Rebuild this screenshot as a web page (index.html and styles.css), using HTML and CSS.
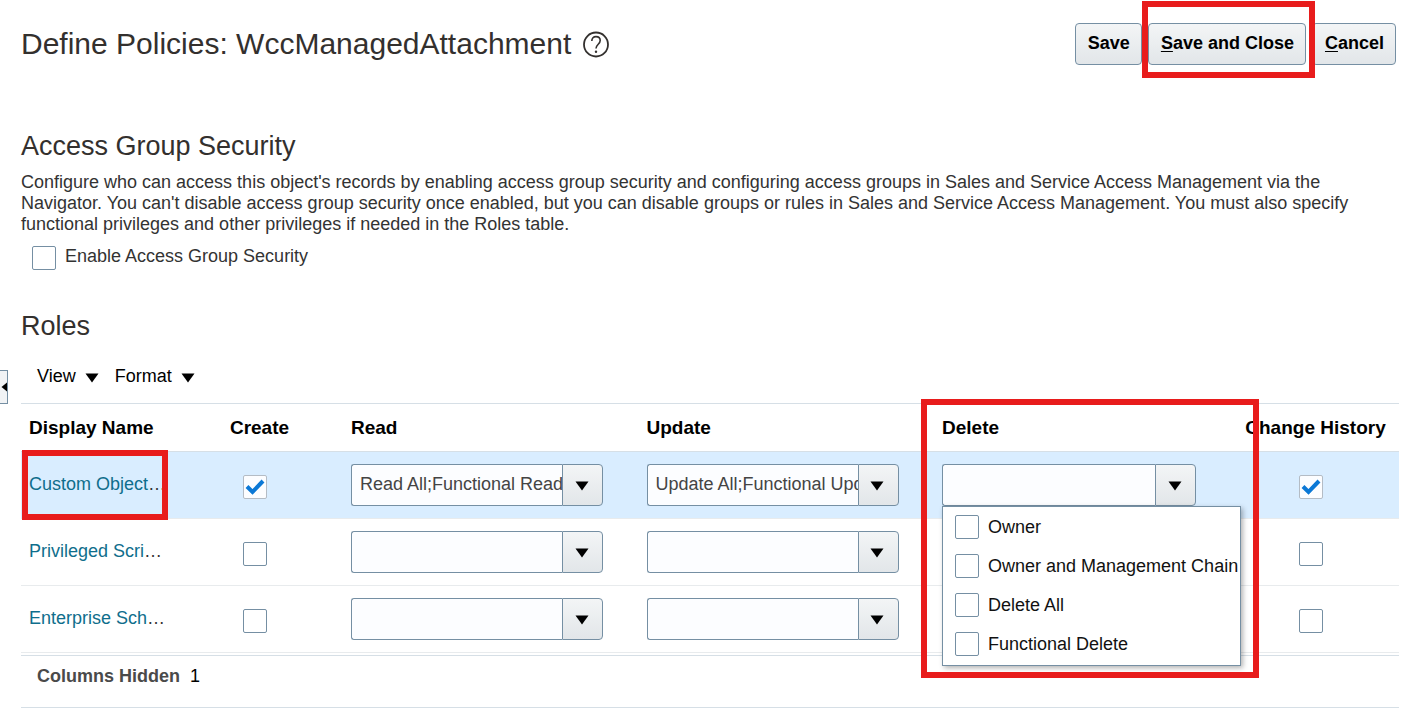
FILE: index.html
```html
<!DOCTYPE html>
<html lang="en">
<head>
<meta charset="utf-8">
<title>Define Policies: WccManagedAttachment</title>
<link rel="stylesheet" href="styles.css">
</head>
<body>
<div class="shell">
  <aside class="rail">
    <button class="rail-toggle" type="button" aria-label="Expand panel">
      <svg width="6" height="10" viewBox="0 0 6 10" aria-hidden="true"><path d="M6 .5v9L.5 5z"/></svg>
    </button>
  </aside>
  <main class="page">
    <header class="page-header">
      <h1 class="page-title">Define Policies: WccManagedAttachment</h1>
      <button class="help" type="button" aria-label="Help">
        <svg width="28" height="28" viewBox="0 0 28 28" fill="none" stroke="#33302e" aria-hidden="true">
          <circle cx="14" cy="14.500" r="12" stroke-width="1.8"/>
          <path d="M9.800 11c0-2.800 1.700-4.400 4.200-4.400s4.200 1.600 4.200 4c0 3.600-4.200 3.800-4.200 8" stroke-width="1.600"/>
          <circle cx="14" cy="21.800" r="1.200" fill="#33302e" stroke="none"/>
        </svg>
      </button>
      <div class="actions">
        <button class="btn" type="button">Save</button>
        <div class="marked marked-save"><button class="btn" type="button"><u>S</u>ave and Close</button></div>
        <button class="btn" type="button"><u>C</u>ancel</button>
      </div>
    </header>

    <section class="access">
      <h2 class="section-title">Access Group Security</h2>
      <p class="intro">Configure who can access this object's records by enabling access group security and configuring access groups in Sales and Service Access Management via the Navigator. You can't disable access group security once enabled, but you can disable groups or rules in Sales and Service Access Management. You must also specify functional privileges and other privileges if needed in the Roles table.</p>
      <div class="enable">
        <input class="check" type="checkbox" id="enable">
        <label for="enable">Enable Access Group Security</label>
      </div>
    </section>

    <section class="roles">
      <h2 class="section-title">Roles</h2>
      <div class="toolbar">
        <button class="menu-btn" type="button">View <svg class="tri" viewBox="0 0 14 10" aria-hidden="true"><path d="M.5.5h13L7 9.500z"/></svg></button>
        <button class="menu-btn" type="button">Format <svg class="tri" viewBox="0 0 14 10" aria-hidden="true"><path d="M.5.5h13L7 9.500z"/></svg></button>
      </div>
      <table class="grid">
        <colgroup><col class="col-name"><col class="col-flag"><col><col><col class="col-delete"><col class="col-flag"></colgroup>
        <thead>
          <tr><th>Display Name</th><th class="flag">Create</th><th>Read</th><th>Update</th><th>Delete</th><th class="flag">Change History</th></tr>
        </thead>
        <tbody>
          <tr class="selected">
            <td class="name marked marked-name"><a href="#">Custom Object</a>…</td>
            <td class="tick"><input class="check" type="checkbox" checked aria-label="Create, Custom Object"></td>
            <td><div class="combo"><input type="text" value="Read All;Functional Read" aria-label="Read, Custom Object"><button type="button" aria-label="Open Read list"><svg class="tri" viewBox="0 0 14 10"><path d="M.5.5h13L7 9.500z"/></svg></button></div></td>
            <td><div class="combo"><input type="text" value="Update All;Functional Update" aria-label="Update, Custom Object"><button type="button" aria-label="Open Update list"><svg class="tri" viewBox="0 0 14 10"><path d="M.5.5h13L7 9.500z"/></svg></button></div></td>
            <td class="marked marked-delete">
              <div class="combo combo-open"><input type="text" aria-label="Delete, Custom Object"><button type="button" aria-label="Close Delete list"><svg class="tri" viewBox="0 0 14 10"><path d="M.5.5h13L7 9.500z"/></svg></button>
                <div class="options">
                  <label class="option"><input class="check" type="checkbox"><span>Owner</span></label>
                  <label class="option"><input class="check" type="checkbox"><span>Owner and Management Chain</span></label>
                  <label class="option"><input class="check" type="checkbox"><span>Delete All</span></label>
                  <label class="option"><input class="check" type="checkbox"><span>Functional Delete</span></label>
                </div>
              </div>
            </td>
            <td class="tick"><input class="check" type="checkbox" checked aria-label="Change History, Custom Object"></td>
          </tr>
          <tr>
            <td class="name"><a href="#">Privileged Scri</a>…</td>
            <td class="tick"><input class="check" type="checkbox" aria-label="Create, Privileged"></td>
            <td><div class="combo"><input type="text" aria-label="Read, Privileged"><button type="button" aria-label="Open Read list"><svg class="tri" viewBox="0 0 14 10"><path d="M.5.5h13L7 9.500z"/></svg></button></div></td>
            <td><div class="combo"><input type="text" aria-label="Update, Privileged"><button type="button" aria-label="Open Update list"><svg class="tri" viewBox="0 0 14 10"><path d="M.5.5h13L7 9.500z"/></svg></button></div></td>
            <td></td>
            <td class="tick"><input class="check" type="checkbox" aria-label="Change History, Privileged"></td>
          </tr>
          <tr>
            <td class="name"><a href="#">Enterprise Sch</a>…</td>
            <td class="tick"><input class="check" type="checkbox" aria-label="Create, Enterprise"></td>
            <td><div class="combo"><input type="text" aria-label="Read, Enterprise"><button type="button" aria-label="Open Read list"><svg class="tri" viewBox="0 0 14 10"><path d="M.5.5h13L7 9.500z"/></svg></button></div></td>
            <td><div class="combo"><input type="text" aria-label="Update, Enterprise"><button type="button" aria-label="Open Update list"><svg class="tri" viewBox="0 0 14 10"><path d="M.5.5h13L7 9.500z"/></svg></button></div></td>
            <td></td>
            <td class="tick"><input class="check" type="checkbox" aria-label="Change History, Enterprise"></td>
          </tr>
        </tbody>
      </table>
      <footer class="status"><strong>Columns Hidden</strong><span>1</span></footer>
    </section>
  </main>
</div>
</body>
</html>
```

FILE: styles.css
```css
* { box-sizing: border-box; }

body {
  margin: 0;
  background: #fff;
  color: #333;
  font: 18px/21px "Liberation Sans", Arial, sans-serif;
}

button, input { font: inherit; }

.shell { display: flex; }

/* left edge splitter */
.rail { flex: none; width: 8px; padding-top: 370px; }
.rail-toggle {
  display: flex;
  align-items: center;
  justify-content: flex-end;
  width: 8px;
  height: 34px;
  padding: 0;
  border: 1px solid #758fa3;
  border-left: 0;
  background: #f1f3f5;
}

.page { flex: 1; min-width: 0; padding: 23px 21px 0 13px; }

.page-header { display: flex; align-items: center; padding-right: 3px; }
.page-title { margin: 0; font-size: 30px; line-height: 42px; font-weight: 400; color: #33302e; }
.help { display: flex; margin-left: 11px; padding: 0; border: 0; background: none; }

.actions { display: flex; gap: 6px; margin-left: auto; }
.btn {
  height: 42px;
  padding: 0 11px 2px 12px;
  border: 1px solid #758fa3;
  border-radius: 4px;
  background: linear-gradient(#f3f5f6, #e2e6e9);
  color: #000;
  font-weight: 700;
}
.btn u { text-underline-offset: 2px; }

/* red callout frames */
.marked { position: relative; }
.marked::after {
  content: "";
  position: absolute;
  z-index: 3;
  border: 6px solid #e81c1c;
  pointer-events: none;
}
.marked-save::after { inset: -22px -9px -13px -6px; }
.marked-name::after { inset: -2px 8px -2px 1px; }
.marked-delete::after { inset: -53px -27px -160px -13px; }

.section-title { margin: 0; font-size: 27px; line-height: 32px; font-weight: 400; color: #33302e; }
.access { padding-top: 65px; }
.intro { margin: 10px 0 0; padding-right: 40px; }
.enable { display: flex; gap: 9px; padding: 11px 0 0 11px; }

.check {
  appearance: none;
  flex: none;
  width: 24px;
  height: 24px;
  margin: 0;
  border: 1px solid #758fa3;
  border-radius: 2px;
  background: #fff;
}
.check:checked {
  border: 1px solid #b4bcc5;
  background: #fcfdff url("data:image/svg+xml,%3Csvg xmlns='http://www.w3.org/2000/svg' viewBox='0 0 22 22'%3E%3Cpath d='M3 10.500l5.500 5.500L19 5' fill='none' stroke='%230b78d6' stroke-width='4'/%3E%3C/svg%3E") center / 22px 22px no-repeat;
}

.roles { padding-top: 40px; }
.toolbar { display: flex; gap: 16px; padding: 24px 0 16px 16px; }
.menu-btn {
  display: flex;
  align-items: center;
  gap: 9px;
  padding: 0;
  border: 0;
  background: none;
  color: #000;
}
.tri { display: block; width: 14px; height: 10px; }
.menu-btn .tri { margin-top: 3px; }

.grid { width: 100%; table-layout: fixed; border-collapse: separate; border-spacing: 0; border-top: 1px solid #d6dfe6; }
.col-name { width: 155px; }
.col-flag { width: 167px; }
.col-delete { width: 298px; }
.grid th {
  height: 48px;
  padding: 0 8px;
  border-bottom: 1px solid #d6dfe6;
  color: #000;
  font-size: 19px;
  text-align: left;
  white-space: nowrap;
}
.grid th.flag { text-align: center; }
.grid td { height: 67px; padding: 0 8px; border-bottom: 1px solid #e8ebed; white-space: nowrap; }
.grid td.name { padding: 0 0 2px 8px; }
.grid td.tick { padding: 4px 18px 0 8px; text-align: center; }
.tick .check { display: block; margin: 0 auto; }
.selected td { background: #d9edff; }
.name a { color: #0f6e8c; text-decoration: none; }

.combo { position: relative; display: flex; width: 252px; height: 42px; }
.combo-open { width: 254px; }
.combo > input {
  flex: 1;
  min-width: 0;
  padding: 0 0 2px 8px;
  border: 1px solid #758fa3;
  border-right: 0;
  border-radius: 3px 0 0 3px;
  background: #fcfdff;
  color: #444;
}
.combo > button {
  display: flex;
  align-items: center;
  justify-content: center;
  width: 41px;
  padding: 2px 2px 0 0;
  border: 1px solid #758fa3;
  border-radius: 0 4px 4px 0;
  background: linear-gradient(#f3f5f6, #e2e6e9);
}

.options {
  position: absolute;
  top: 42px;
  left: 0;
  z-index: 2;
  display: grid;
  gap: 15px;
  width: 299px;
  padding: 8px 0 9px 12px;
  border: 1px solid #758fa3;
  background: #fff;
  box-shadow: 2px 2px 5px rgba(0, 0, 0, .3);
  color: #111;
}
.option { display: flex; align-items: center; gap: 9px; }

.status { display: flex; gap: 10px; margin-top: 2px; padding: 10px 0 20px 16px; border: solid #d6dfe6; border-width: 1px 0; }
.status strong { color: #4a4a4a; }
.status span { color: #000; }
```
